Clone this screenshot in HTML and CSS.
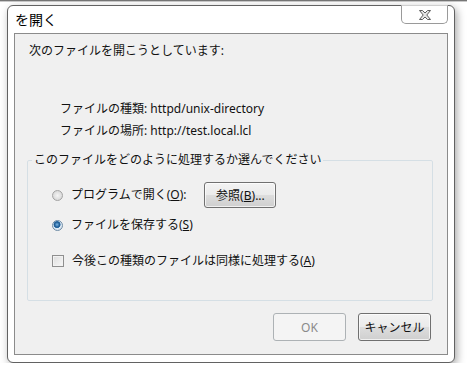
FILE: index.html
```html
<!DOCTYPE html>
<html lang="ja">
<head>
  <meta charset="UTF-8" />
  <title>を開く</title>
  <link rel="stylesheet" href="styles.css">
</head>
<body>
  <div class="top-edge"></div>

  <!-- ダイアログ本体 -->
  <div class="window">
    <div class="titlebar">
      <span class="title">を開く</span>
      <button class="close-btn" aria-label="閉じる">
        <svg width="12" height="10" viewBox="0 0 12 10">
          <polygon points="0.5,0.5 3.5,0.5 6,3 8.5,0.5 11.5,0.5 7.8,5 11.5,9.5 8.5,9.5 6,7 3.5,9.5 0.5,9.5 4.2,5"
                   fill="#e4e4e4" stroke="#5c5c5c" stroke-width="1" stroke-linejoin="round"/>
        </svg>
      </button>
    </div>

    <div class="content">
      <div class="intro">次のファイルを開こうとしています:</div>

      <div class="info">
        <div class="info-row"><span class="info-label">ファイルの種類:</span> httpd/unix-directory</div>
        <div class="info-row"><span class="info-label">ファイルの場所:</span> http://test.local.lcl</div>
      </div>

      <fieldset class="group">
        <legend>このファイルをどのように処理するか選んでください</legend>
        <div class="options">
          <div class="option first">
            <span class="radio"></span>
            <span>プログラムで開く(<u>O</u>):</span>
            <button class="btn browse-btn">参照(<u>B</u>)...</button>
          </div>
          <div class="option second">
            <span class="radio checked"></span>
            <span>ファイルを保存する(<u>S</u>)</span>
          </div>
          <div class="option third">
            <span class="checkbox"></span>
            <span>今後この種類のファイルは同様に処理する(<u>A</u>)</span>
          </div>
        </div>
      </fieldset>

      <div class="footer">
        <button class="btn dlg-btn" disabled>OK</button>
        <button class="btn dlg-btn">キャンセル</button>
      </div>
    </div>
  </div>
</body>
</html>
```

FILE: styles.css
```css
body, html {
  margin: 0;
  padding: 0;
  background: #ffffff;
  font-family: "Noto Sans", "Noto Sans CJK JP", sans-serif;
  font-size: 12px;
  color: #111;
}

.top-edge {
  height: 1px;
  border-top: 1px solid #767676;
  background: #c9c9c9;
}

.window {
  margin: 3px 0 0 7px;
  border: 1px solid #626262;
  border-radius: 6px;
  background: #ffffff;
  box-shadow: 2px 3px 8px rgba(0, 0, 0, 0.35);
  padding: 0 6px 7px 6px;
  box-sizing: border-box;
  width: 448px;
  height: 358px;
  display: flex;
  flex-direction: column;
}

.titlebar {
  height: 27px;
  display: flex;
  justify-content: space-between;
  align-items: flex-start;
}

.title {
  font-family: "Noto Sans CJK JP", sans-serif;
  font-size: 14px;
  line-height: 27px;
  padding-left: 1px;
  color: #000;
}

.close-btn {
  width: 47px;
  height: 19px;
  margin-top: -1px;
  padding: 0;
  border: 1px solid #9a9a9a;
  border-top-color: #d0d0d0;
  border-radius: 0 0 5px 5px;
  background: #ffffff;
  display: flex;
  justify-content: center;
  align-items: center;
}

.content {
  flex: 1;
  background: #f0f0f0;
  border: 1px solid #8b8b8b;
  padding: 9px 14px 0 12px;
  display: flex;
  flex-direction: column;
}

.intro {
  line-height: 16px;
  padding-left: 2px;
}

.info {
  margin-top: 39px;
  padding-left: 33px;
  line-height: 22px;
}

.group {
  margin: 10px 0 0 0;
  padding: 0 4px;
  border: 1px solid #d5dfe5;
  border-radius: 2px;
}

.group legend {
  padding: 0 2px;
  line-height: 16px;
}

.options {
  padding: 14px 0 29px 20px;
  display: flex;
  flex-direction: column;
}

.option {
  display: flex;
  align-items: center;
  gap: 8px;
  line-height: 20px;
}

.option.first {
  height: 26px;
}

.option.second {
  margin-top: 7px;
}

.option.third {
  margin-top: 16px;
}

.radio {
  width: 11px;
  height: 11px;
  border-radius: 50%;
  border: 1px solid #a3a3a3;
  background: radial-gradient(circle at 50% 50%, #f4f4f4 0, #dedede 60%, #cfcfcf 100%);
  box-sizing: border-box;
  display: inline-block;
}

.radio.checked {
  border-color: #6f8ca6;
  background: radial-gradient(circle at 45% 40%, #7ab6e6 0, #1f5c94 2.5px, #2f6ea6 3.2px, #dfeaf4 3.8px, #c9d7e4 100%);
}

.checkbox {
  width: 12px;
  height: 12px;
  border: 1px solid #8f8f8f;
  background: linear-gradient(135deg, #dcdcdc, #f8f8f8);
  box-shadow: inset 0 0 0 1px #f2f2f2;
  box-sizing: border-box;
  display: inline-block;
}

.btn {
  font-family: "Noto Sans", "Noto Sans CJK JP", sans-serif;
  font-size: 12px;
  color: #111;
  border: 1px solid #707070;
  border-radius: 3px;
  background: linear-gradient(to bottom, #f3f3f3 0%, #ebebeb 48%, #dddddd 52%, #cfcfcf 100%);
  box-shadow: inset 0 0 0 1px rgba(255, 255, 255, 0.7);
  padding: 0;
}

.browse-btn {
  width: 72px;
  height: 26px;
  margin-left: 10px;
}

.footer {
  display: flex;
  justify-content: flex-end;
  gap: 12px;
  margin-top: 12px;
  padding-right: 2px;
}

.dlg-btn {
  width: 73px;
  height: 28px;
}

.dlg-btn:disabled {
  color: #8a8a8a;
  border-color: #adb2b5;
  background: #f4f4f4;
  box-shadow: none;
}
```
